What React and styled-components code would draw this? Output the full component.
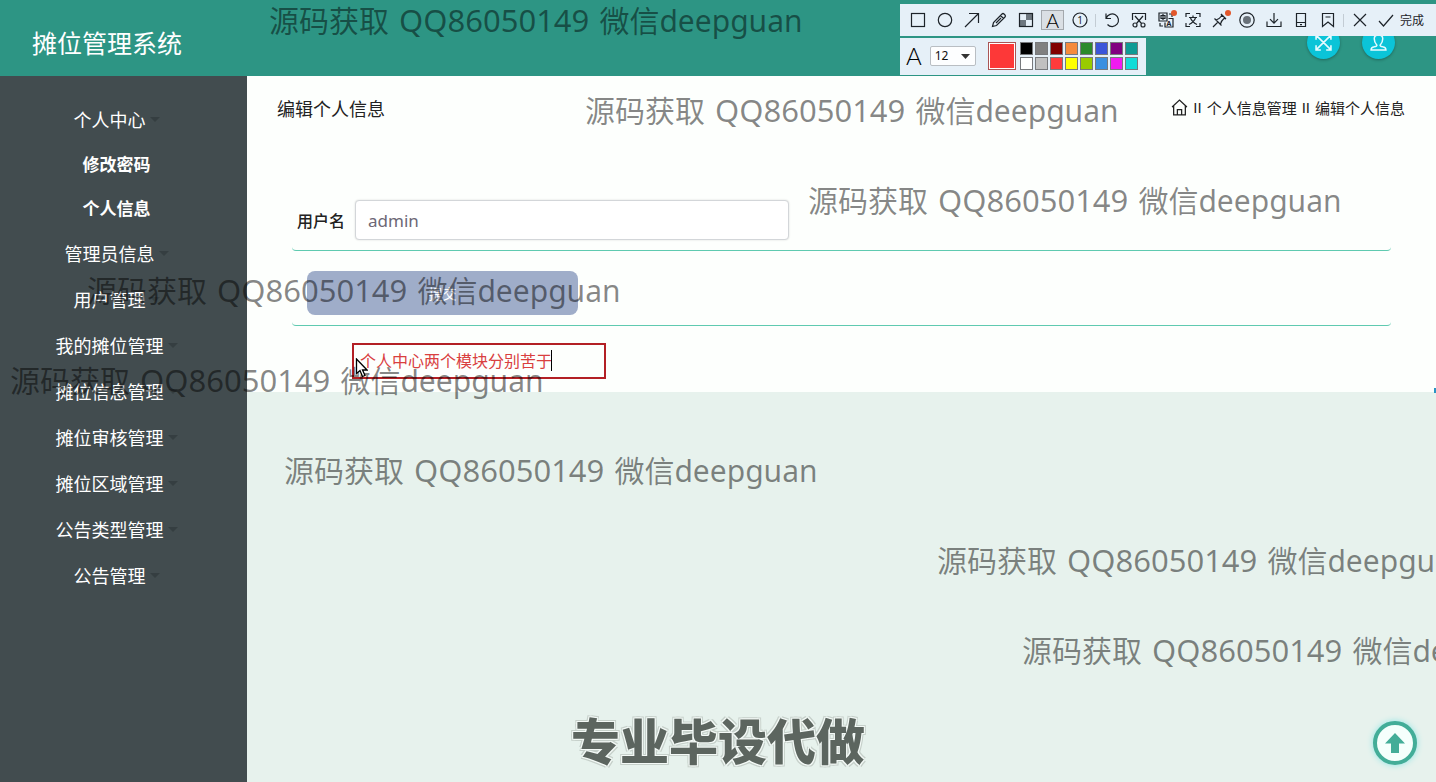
import React from 'react'
import styled, { createGlobalStyle } from 'styled-components'

const GlobalStyle = createGlobalStyle`
    * {
        box-sizing: border-box;
    }

    body {
        margin: 0;
        font-family: "Noto Sans", "Noto Sans CJK SC", sans-serif;
        color: #222;
    }

    button, input, select {
        font-family: inherit;
    }
`

const PageWrapper = styled.div`
    position: relative;
    min-height: 100vh;
    display: flex;
    flex-direction: column;
    overflow: hidden;
    background: #e7f2ed;
`

const Header = styled.header`
    height: 76px;
    padding: 8px 41px 0 32px;
    display: flex;
    align-items: center;
    justify-content: space-between;
    background: #2d9584;
`

const SystemTitle = styled.h1`
    margin: 0;
    font-size: 25px;
    font-weight: 400;
    color: #fff;
`

const HeaderActions = styled.div`
    display: flex;
    gap: 22px;
`

const RoundButton = styled.button`
    width: 33px;
    height: 33px;
    padding: 0;
    display: flex;
    align-items: center;
    justify-content: center;
    border: 0;
    border-radius: 50%;
    background: #0bc4d8;
    box-shadow: 0 1px 3px rgba(0, 0, 0, 0.3);
`

const Body = styled.div`
    flex: 1;
    display: flex;
`

const Sidebar = styled.nav`
    flex: 0 0 247px;
    padding: 20px 14px 0 0;
    background: #424c4f;
`

const MenuList = styled.ul`
    margin: 0;
    padding: 0;
    list-style: none;
`

const MenuLink = styled.a`
    height: ${props => props.$sub ? '44px' : '46px'};
    padding-bottom: ${props => props.$sub ? '2px' : '0'};
    display: flex;
    align-items: center;
    justify-content: center;
    font-size: ${props => props.$sub ? '17px' : '18px'};
    font-weight: ${props => props.$sub ? 700 : 400};
    color: #fff;
    text-decoration: none;
`

const Caret = styled.span`
    margin-left: 4px;
    border: 5px solid transparent;
    border-top-color: #353e41;
    border-bottom: 0;
`

const Main = styled.main`
    flex: 1;
    min-width: 0;
`

const Panel = styled.section`
    height: 316px;
    padding: 0 45px;
    background: #fdfffd;
`

const TitleBar = styled.div`
    height: 64px;
    margin: 0 -14px 0 -15px;
    display: flex;
    align-items: center;
    justify-content: space-between;
`

const PageTitle = styled.h2`
    margin: 0;
    font-size: 18px;
    font-weight: 400;
`

const Breadcrumb = styled.div`
    padding-bottom: 2px;
    display: flex;
    align-items: center;
    gap: 5px;
    font-family: "Liberation Sans", "Noto Sans CJK SC", sans-serif;
    font-size: 15px;

    a {
        color: inherit;
        text-decoration: none;
    }

    svg {
        display: block;
    }
`

const Form = styled.form`
    padding-top: 50px;
`

const FormRow = styled.div`
    display: flex;
    align-items: center;
    gap: 10px;
    padding: ${props => props.$actions ? '20px 15px 10px' : '10px 5px'};
    border-bottom: 1px solid #5fcab0;
    border-radius: 4px;
`

const Label = styled.label`
    font-size: 16px;
    font-weight: 500;
`

const TextInput = styled.input`
    width: 434px;
    height: 40px;
    padding: 0 12px;
    border: 1px solid #d3d6d9;
    border-radius: 4px;
    box-shadow: 0 0 2px rgba(0, 0, 0, 0.15);
    background: #fff;
    font-size: 17px;
    color: #6c6775;
`

const SubmitButton = styled.button`
    width: 271px;
    height: 44px;
    padding: 0;
    border: 0;
    border-radius: 8px;
    background: #9fadc9;
    font-size: 14px;
    color: #fff;
`

// floating capture tools
const CaptureTools = styled.div`
    position: absolute;
    top: 4px;
    right: 0;
    width: 536px;
    display: flex;
    flex-direction: column;
    align-items: flex-start;
    gap: 2px;
`

const ToolRow = styled.div`
    height: 32px;
    width: 100%;
    padding-left: 4px;
    display: flex;
    align-items: center;
    background: #e6f0f8;
`

const StyleRow = styled.div`
    height: 37px;
    padding: 0 8px 2px 6px;
    display: flex;
    align-items: center;
    background: #e6f0f8;
`

const ToolButton = styled.button`
    position: relative;
    flex: 0 0 ${props => props.$active ? '23px' : '27px'};
    height: 20px;
    margin: 0 ${props => props.$active ? '2px' : '0'};
    padding: 0;
    display: flex;
    align-items: center;
    justify-content: center;
    border: ${props => props.$active ? '1px solid #a3a8ad' : '0'};
    background: ${props => props.$active ? '#dadfe4' : 'none'};
    color: #1d2329;
`

const Divider = styled.span`
    flex: 0 0 5px;
    height: 13px;
    background: linear-gradient(#c3ccd4, #c3ccd4) center / 1px 100% no-repeat;
`

const Dot = styled.span`
    position: absolute;
    top: 0;
    right: 2px;
    width: 6px;
    height: 6px;
    border-radius: 50%;
    background: #e2572b;
`

const DoneButton = styled.button`
    height: 20px;
    padding: 0 0 0 5px;
    display: flex;
    align-items: center;
    gap: 6px;
    border: 0;
    background: none;
    font-size: 12px;
    color: #1d2329;
`

const Letter = styled.span`
    font-family: Lato, sans-serif;
    font-weight: 300;
    font-size: ${props => props.$size};
    line-height: 1;
    color: #000;
`

const SizePicker = styled.div`
    position: relative;
    margin: 0 12px 0 8px;

    select {
        display: block;
        width: 46px;
        height: 20px;
        padding: 0 4px;
        appearance: none;
        border: 1px solid #b9bec3;
        border-radius: 2px;
        background: #fdfeff;
        font-size: 12px;
        color: #111;
    }

    svg {
        position: absolute;
        top: 8px;
        right: 6px;
        pointer-events: none;
    }
`

const Swatch = styled.button`
    width: ${props => props.$large ? '28px' : '13px'};
    height: ${props => props.$large ? '28px' : '13px'};
    padding: 0;
    border: 1px solid ${props => props.$large ? '#a55' : '#77797c'};
    background: ${props => props.$color};
    box-shadow: ${props => props.$large ? 'inset 0 0 0 1px #fff' : 'none'};
`

const SwatchGrid = styled.div`
    margin-left: 4px;
    display: grid;
    grid-template-columns: repeat(8, 13px);
    gap: 2px;
`

const Note = styled.div`
    position: absolute;
    top: 343px;
    left: 352px;

    input {
        display: block;
        width: 254px;
        height: 36px;
        padding: 0 6px 2px;
        border: 2px solid #b32025;
        outline: 0;
        background: none;
        font-size: 16px;
        color: #d9403f;
    }
`

const TextCursor = styled.span`
    position: absolute;
    top: 7px;
    left: 199px;
    width: 1px;
    height: 21px;
    background: #000;
`

const Pointer = styled.svg`
    position: absolute;
    top: 358px;
    left: 355px;
`

const Overlay = styled.div`
    position: absolute;
    inset: 0;
    overflow: hidden;
    pointer-events: none;
`

const Watermark = styled.span`
    position: absolute;
    font-size: 30px;
    line-height: 40px;
    white-space: nowrap;
    color: rgba(0, 0, 0, 0.47);
`

const Contact = styled.span`
    padding: 0 2px;
    font-size: 31px;
`

const Slogan = styled.div`
    position: absolute;
    bottom: 6px;
    left: 0;
    right: 0;
    text-align: center;
    font-size: 49px;
    line-height: 70px;
    font-weight: 900;
    color: #5c655f;
    text-shadow: 1px 1px 0 #f4faf7, -1px -1px 0 #f4faf7, 1px -1px 0 #f4faf7, -1px 1px 0 #f4faf7,
        2px 2px 0 #c6d0ca, -2px -2px 0 #c6d0ca, 2px -2px 0 #c6d0ca, -2px 2px 0 #c6d0ca;
`

const BackToTop = styled.button`
    position: absolute;
    right: 19px;
    bottom: 17px;
    width: 44px;
    height: 44px;
    padding: 0;
    display: flex;
    align-items: center;
    justify-content: center;
    border: 4px solid #43ad98;
    border-radius: 50%;
    background: #f5fffc;
    box-shadow: 0 0 6px #8fe5e5;
`

const EdgeTab = styled.span`
    position: absolute;
    top: 388px;
    right: 0;
    width: 2px;
    height: 5px;
    background: #2a93c4;
`

const Icon = ({ size = 16, children }) => {
    return <svg width={size} height={size} viewBox="0 0 16 16" fill="none" stroke="currentColor" strokeWidth="1.2" aria-hidden="true">
        {children}
    </svg>
}

const menu = [
    { text: '个人中心', caret: true },
    { text: '修改密码', sub: true },
    { text: '个人信息', sub: true },
    { text: '管理员信息', caret: true },
    { text: '用户管理', caret: true },
    { text: '我的摊位管理', caret: true },
    { text: '摊位信息管理', caret: true },
    { text: '摊位审核管理', caret: true },
    { text: '摊位区域管理', caret: true },
    { text: '公告类型管理', caret: true },
    { text: '公告管理', caret: true },
]

const swatches = [
    '#000000', '#808080', '#800000', '#f58a3c', '#2b8a2b', '#3b55d9', '#800080', '#0f9b95',
    '#ffffff', '#c0c0c0', '#ff3b3b', '#ffff00', '#99cc00', '#3a8fe0', '#f01af0', '#12dcd8',
]

const watermarks = [
    [269, 0], [585, 90], [808, 180], [87, 270],
    [10, 360], [284, 450], [937, 540], [1022, 630],
]

const drawTools = [
    { label: '矩形', icon: <rect x="1.5" y="1.5" width="13" height="13" /> },
    { label: '椭圆', icon: <circle cx="8" cy="8" r="6.7" /> },
    { label: '箭头', icon: <path d="M1 15L14.5 1.5M5 1.5h9.5V11" /> },
    { label: '画笔', icon: <path d="M1.5 14.5l1-4 8.5-8.5q1-1 2 0l1 1q1 1 0 2L5.5 13.5zM9.5 3.5l3 3M5 11l5-5" /> },
    {
        label: '马赛克',
        icon: <>
            <path d="M8 1.5h6.5V8H8zM1.5 8H8v6.5H1.5z" fill="#6e777f" stroke="none" />
            <rect x="1.5" y="1.5" width="13" height="13" />
        </>
    },
    { label: '文字', active: true },
    {
        label: '序号',
        icon: <>
            <circle cx="8" cy="8" r="7" />
            <text x="8" y="11.5" fontSize="10" textAnchor="middle" fill="currentColor" stroke="none">1</text>
        </>
    },
]

const actionTools = [
    { label: '撤销', icon: <path d="M2 1.5v5h5M2.3 6A6.3 6.3 0 1 1 3.5 12.5" /> },
    {
        label: '裁剪',
        icon: <>
            <path d="M1.5 8V1.5h13V8M4 4l6.5 7.5M12 4l-6.5 7.5" />
            <circle cx="4" cy="13" r="2" />
            <circle cx="12" cy="13" r="2" />
        </>
    },
    {
        label: '翻译',
        dot: true,
        icon: <>
            <path d="M1 1h8v8H1zM3 3.5h4v3H3zM5 2v6M10.5 6.5H15V15H7v-4.5M2 11v3h3M11 2h3v3" />
            <text x="11" y="13.5" fontSize="7" fontWeight="700" textAnchor="middle" fill="currentColor" stroke="none">A</text>
        </>
    },
    { label: '识别', icon: <path d="M1 5V1.5h4M11 1.5h4V5M15 11v3.5h-4M5 14.5H1V11M4 5.5h8M8 3.5v2M5.5 6q1.5 4 6.5 6.5M10.5 6Q9 10 4 12.5" /> },
    { label: '贴图', dot: true, icon: <path d="M1 15l5-5M2.5 6.5l7 7M4 8q3-.5 6-4.5L9 2.5M8.5 12q.5-3 4-6l1 1M9 2l5 5" /> },
    {
        label: '录制',
        icon: <>
            <circle cx="8" cy="8" r="7.2" />
            <circle cx="8" cy="8" r="4" fill="#697179" stroke="none" />
        </>
    },
    { label: '保存', icon: <path d="M8 1v10M4 7.2l4 4 4-4M1 9.5v5h14v-5" /> },
    { label: '手机', icon: <path d="M3.5 1.5h9v13h-9zM3.5 10.5h9M7 12.7h2" /> },
    { label: '收藏', icon: <path d="M2.5 1.5h11v13L8 10l-5.5 4.5zM5.5 5h5" /> },
]

const renderTool = (tool) => {
    return <ToolButton key={tool.label} type="button" aria-label={tool.label} $active={tool.active}>
        {tool.active ? <Letter $size="20px">A</Letter> : <Icon>{tool.icon}</Icon>}
        {tool.dot && <Dot />}
    </ToolButton>
}

const Toolbar = () => {
    return <CaptureTools>
        <ToolRow>
            {drawTools.map(renderTool)}
            <Divider />
            {actionTools.map(renderTool)}
            <Divider />
            <ToolButton type="button" aria-label="关闭">
                <Icon><path d="M2 2l12 12M14 2L2 14" /></Icon>
            </ToolButton>
            <DoneButton type="button">
                <Icon><path d="M1 9l4.5 5L15 3" /></Icon>
                完成
            </DoneButton>
        </ToolRow>
        <StyleRow>
            <Letter $size="24px">A</Letter>
            <SizePicker>
                <select aria-label="字号" defaultValue="12">
                    <option value="12">12</option>
                    <option value="14">14</option>
                </select>
                <svg width="9" height="5" viewBox="0 0 9 5"><path d="M0 0h9L4.5 5z" fill="#333" /></svg>
            </SizePicker>
            <Swatch type="button" aria-label="当前颜色" $large $color="#fd3838" />
            <SwatchGrid>
                {swatches.map(color => <Swatch key={color} type="button" aria-label={color} $color={color} />)}
            </SwatchGrid>
        </StyleRow>
    </CaptureTools>
}

const App = () => {
    return <PageWrapper>
        <GlobalStyle />
        <Header>
            <SystemTitle>摊位管理系统</SystemTitle>
            <HeaderActions>
                <RoundButton type="button" aria-label="全屏">
                    <svg width="17" height="17" viewBox="0 0 16 16" fill="none" stroke="#e6fbff" strokeWidth="1.5">
                        <path d="M1.5 1.5l13 13M14.5 1.5l-13 13M1 5.5V1h4.5M10.5 1H15v4.5M15 10.5V15h-4.5M5.5 15H1v-4.5" />
                    </svg>
                </RoundButton>
                <RoundButton type="button" aria-label="用户">
                    <svg width="17" height="17" viewBox="0 0 16 16" fill="none" stroke="#e6fbff" strokeWidth="1.4">
                        <path d="M6.5 10.5Q4 8 4 4.5 4 1 8 1t4 3.5q0 3.5-2.5 6 0 1 2.5 1.5 3 .5 3 3H1q0-2.5 3-3 2.5-.5 2.5-1.5z" />
                    </svg>
                </RoundButton>
            </HeaderActions>
        </Header>

        <Body>
            <Sidebar>
                <MenuList>
                    {menu.map(item => <li key={item.text}>
                        <MenuLink href="#" $sub={item.sub}>
                            {item.text}
                            {item.caret && <Caret />}
                        </MenuLink>
                    </li>)}
                </MenuList>
            </Sidebar>
            <Main>
                <Panel>
                    <TitleBar>
                        <PageTitle>编辑个人信息</PageTitle>
                        <Breadcrumb>
                            <a href="#" aria-label="首页">
                                <Icon size={17}>
                                    <path d="M1 7.5L8 1l7 6.5M2.5 6.5V15h11V6.5M6 15v-5h4v5" />
                                </Icon>
                            </a>
                            <span>II</span>
                            <a href="#">个人信息管理</a>
                            <span>II</span>
                            <span>编辑个人信息</span>
                        </Breadcrumb>
                    </TitleBar>
                    <Form onSubmit={e => e.preventDefault()}>
                        <FormRow>
                            <Label htmlFor="username">用户名</Label>
                            <TextInput id="username" defaultValue="admin" />
                        </FormRow>
                        <FormRow $actions>
                            <SubmitButton type="submit">提交</SubmitButton>
                        </FormRow>
                    </Form>
                </Panel>
            </Main>
        </Body>

        <Note>
            <input aria-label="批注" defaultValue="个人中心两个模块分别苦于" />
            <TextCursor />
        </Note>
        <BackToTop type="button" aria-label="返回顶部">
            <svg width="20" height="20" viewBox="0 0 20 20" fill="#43ad98">
                <path d="M10 0l10 10.5h-6V20H6v-9.5H0z" />
            </svg>
        </BackToTop>
        <EdgeTab />
        <Toolbar />
        <Overlay>
            {watermarks.map(([left, top]) => <Watermark key={top} style={{ left, top }}>
                源码获取<Contact> QQ86050149 </Contact>微信deepguan
            </Watermark>)}
            <Slogan>专业毕设代做</Slogan>
        </Overlay>
        <Pointer width="13" height="20" viewBox="0 0 13 20" fill="#fff" stroke="#000" strokeWidth="1.3">
            <path d="M1.5 1v14.5l3.5-3 2.5 6 2.5-1-2.5-5.5h4.5z" />
        </Pointer>
    </PageWrapper>
}

export default App
